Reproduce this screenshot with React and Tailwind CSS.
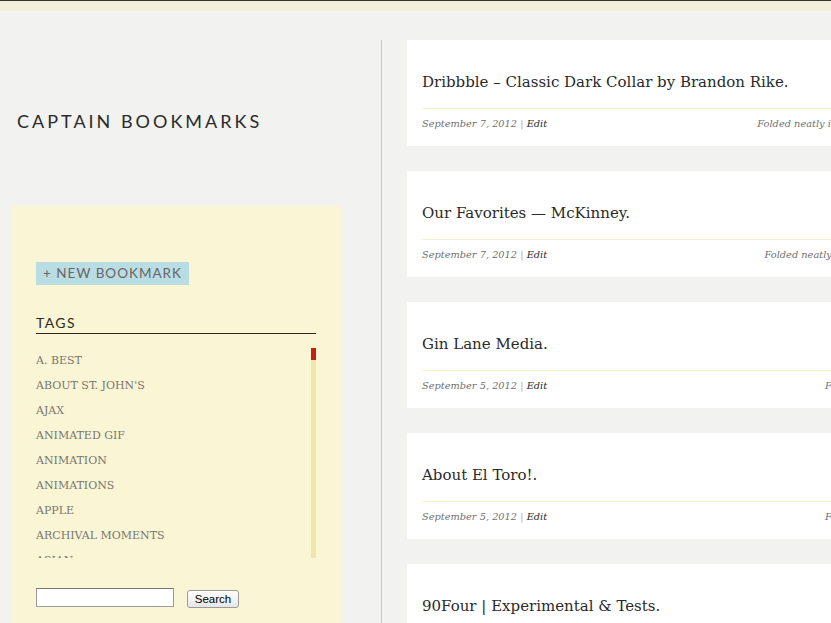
import React from "react";

const tags = [
  "A. BEST",
  "ABOUT ST. JOHN'S",
  "AJAX",
  "ANIMATED GIF",
  "ANIMATION",
  "ANIMATIONS",
  "APPLE",
  "ARCHIVAL MOMENTS",
  "ASIAN",
  "AUDIO",
];

const posts = [
  { title: "Dribbble – Classic Dark Collar by Brandon Rike.", date: "September 7, 2012", right: "Folded neatly in Design, Apparel" },
  { title: "Our Favorites — McKinney.", date: "September 7, 2012", right: "Folded neatly in Agencies, Web" },
  { title: "Gin Lane Media.", date: "September 5, 2012", right: "Folded neatly in UI" },
  { title: "About El Toro!.", date: "September 5, 2012", right: "Folded neatly in UI" },
  { title: "90Four | Experimental & Tests.", date: "September 5, 2012", right: "Folded neatly in UI" },
];

const serif = "font-['Georgia','DejaVu_Serif',serif]";

export default function App() {
  return (
    <div className="w-[831px] h-[623px] overflow-hidden bg-[#f2f2f0] relative">
      <div className="h-px bg-[#333]" />
      <div className="h-[10px] bg-[#f2efd9]" />
      <div className="flex pt-[29px]">
        <aside className="w-[382px] shrink-0 border-r border-[#c8c8c6] h-[600px]">
          <div className="pl-[17px] pt-[71px] h-[166px]">
            <h1 className="font-['Lato',sans-serif] text-[18px] leading-[20px] tracking-[3px] text-[#2b2b2b] font-normal">
              CAPTAIN BOOKMARKS
            </h1>
          </div>
          <div className="ml-[12px] w-[329px] bg-[#f9f5d5] pl-[24px] pr-[25px] pt-[54px] pb-[20px]">
            <div className="inline-block bg-[#b9dde3] h-[23px] px-[7px] font-['Lato',sans-serif] text-[13.5px] leading-[23px] tracking-[1px] text-[#666]">
              + NEW BOOKMARK
            </div>
            <div className="mt-[31px] border-b border-[#2e2a20] pb-[3px] font-['Lato',sans-serif] text-[14px] leading-[14px] tracking-[1.4px] text-[#2e2a20]">
              TAGS
            </div>
            <div className="mt-[14px] flex h-[210px]">
              <ul className={`flex-1 overflow-hidden ${serif}`}>
                {tags.map((t) => (
                  <li key={t} className="h-[25px] pt-[5px] text-[11px] leading-[16px] text-[#7a7670] whitespace-nowrap">
                    {t}
                  </li>
                ))}
              </ul>
              <div className="w-[5px] bg-[#f0e6a8] flex flex-col">
                <div className="h-[12px] bg-[#c42215]" />
              </div>
            </div>
            <div className="mt-[29px] flex items-center gap-[13px]">
              <input className="w-[138px] h-[19px] bg-white border border-[#9a9a9a] border-t-[#777]" />
              <button className="mt-[3px] h-[18px] w-[52px] rounded-[3px] border border-[#9a9a9a] bg-gradient-to-b from-white to-[#e6e6e6] font-['Liberation_Sans',sans-serif] text-[11.5px] leading-[16px] text-black">
                Search
              </button>
            </div>
          </div>
        </aside>
        <main className="pl-[25px] flex flex-col gap-[25px]">
          {posts.map((p, i) => (
            <article key={i} className="w-[523px] h-[106px] bg-white pl-[15px] pt-[31px]">
              <h2 className={`${serif} text-[15px] leading-[22px] text-[#2a2a2a] h-[37px] whitespace-nowrap`}>{p.title}</h2>
              <div className="border-t border-[#f7efcc] flex justify-between items-center h-[30px] pr-[10px] pt-[1px]">
                <div className={`${serif} italic text-[9.8px] text-[#6f6f6f] whitespace-nowrap`}>
                  {p.date} <span className="not-italic text-[#c9a86b]">|</span>{" "}
                  <span className="text-[#2a2a2a]">Edit</span>
                </div>
                <div className={`${serif} italic text-[9.8px] text-[#6f6f6f] whitespace-nowrap`}>{p.right}</div>
              </div>
            </article>
          ))}
        </main>
      </div>
    </div>
  );
}
